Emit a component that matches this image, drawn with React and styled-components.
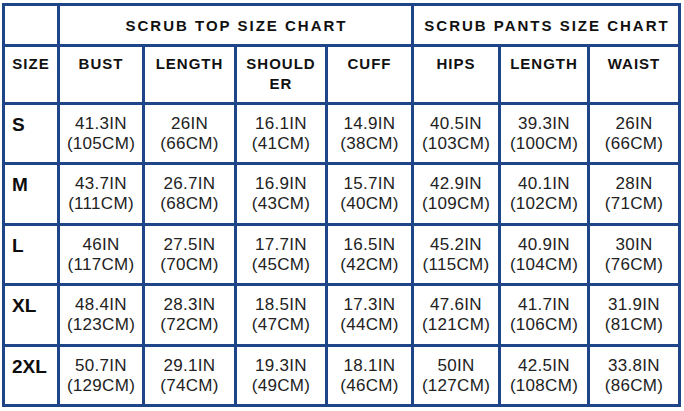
import React from 'react'
import styled, { createGlobalStyle } from 'styled-components'

const rows = [
  { size: 'S', top: [['41.3IN', '105CM'], ['26IN', '66CM'], ['16.1IN', '41CM'], ['14.9IN', '38CM']], pants: [['40.5IN', '103CM'], ['39.3IN', '100CM'], ['26IN', '66CM']] },
  { size: 'M', top: [['43.7IN', '111CM'], ['26.7IN', '68CM'], ['16.9IN', '43CM'], ['15.7IN', '40CM']], pants: [['42.9IN', '109CM'], ['40.1IN', '102CM'], ['28IN', '71CM']] },
  { size: 'L', top: [['46IN', '117CM'], ['27.5IN', '70CM'], ['17.7IN', '45CM'], ['16.5IN', '42CM']], pants: [['45.2IN', '115CM'], ['40.9IN', '104CM'], ['30IN', '76CM']] },
  { size: 'XL', top: [['48.4IN', '123CM'], ['28.3IN', '72CM'], ['18.5IN', '47CM'], ['17.3IN', '44CM']], pants: [['47.6IN', '121CM'], ['41.7IN', '106CM'], ['31.9IN', '81CM']] },
  { size: '2XL', top: [['50.7IN', '129CM'], ['29.1IN', '74CM'], ['19.3IN', '49CM'], ['18.1IN', '46CM']], pants: [['50IN', '127CM'], ['42.5IN', '108CM'], ['33.8IN', '86CM']] },
]

const Global = createGlobalStyle`
  body {
    margin: 0;
    background: #fff;
    font-family: "Liberation Sans", Arial, sans-serif;
  }
`

const Wrap = styled.div`
  padding: 3px 0 0 2px;
`

const Chart = styled.div`
  display: grid;
  width: 679px;
  box-sizing: border-box;
  grid-template-columns: 52px 82px 89px 88px 83px 84px 86px 88px;
  grid-template-rows: 38px 55px repeat(5, 57.4px);
  gap: 3px;
  padding: 3px;
  background: #1d4587;
`

const Cell = styled.div`
  background: #fff;
  box-sizing: border-box;
`

const Title = styled(Cell)`
  grid-column: span ${p => p.$span};
  display: flex;
  align-items: center;
  justify-content: center;
  font-size: 15px;
  font-weight: 700;
  letter-spacing: 2px;
  color: #111;
  padding-left: 2px;
`

const Head = styled(Cell)`
  padding-top: 7px;
  text-align: center;
  font-size: 15px;
  line-height: 20px;
  font-weight: 700;
  letter-spacing: 1px;
  color: #111;
`

const Size = styled(Cell)`
  padding: 10px 0 0 7px;
  font-size: 19px;
  line-height: 20px;
  font-weight: 700;
  color: #0d0d0d;
`

const Value = styled(Cell)`
  padding-top: 9px;
  text-align: center;
  font-size: 17px;
  line-height: 20px;
  letter-spacing: 0.3px;
  color: #222;
`

export default function App() {
  return (
    <Wrap>
      <Global />
      <Chart>
        <Cell />
        <Title $span={4}>SCRUB TOP SIZE CHART</Title>
        <Title $span={3}>SCRUB PANTS SIZE CHART</Title>

        <Head>SIZE</Head>
        <Head>BUST</Head>
        <Head>LENGTH</Head>
        <Head>SHOULD<br />ER</Head>
        <Head>CUFF</Head>
        <Head>HIPS</Head>
        <Head>LENGTH</Head>
        <Head>WAIST</Head>

        {rows.map(r => (
          <React.Fragment key={r.size}>
            <Size>{r.size}</Size>
            {[...r.top, ...r.pants].map(([inch, cm], i) => (
              <Value key={i}>
                {inch}
                <br />({cm})
              </Value>
            ))}
          </React.Fragment>
        ))}
      </Chart>
    </Wrap>
  )
}
